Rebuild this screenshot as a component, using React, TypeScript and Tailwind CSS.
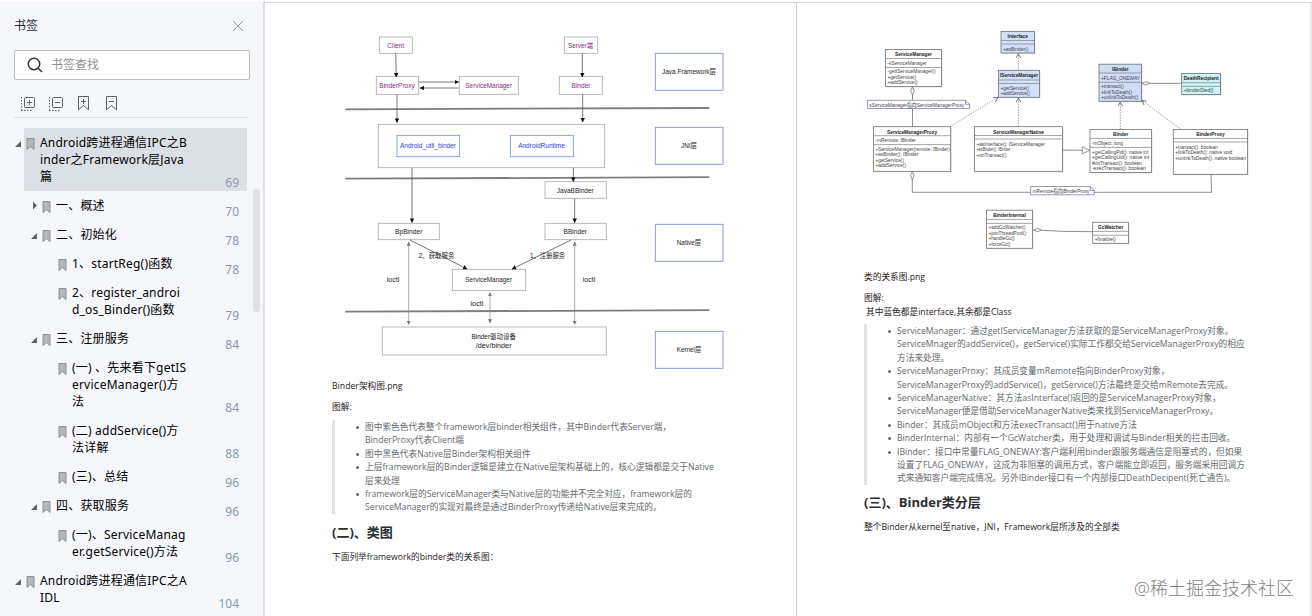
import React from "react"

type Level = 1 | 2 | 3

interface Bookmark {
  lines: string[]
  page: number
  level: Level
  arrow?: "open" | "closed"
  active?: boolean
}

const bookmarks: Bookmark[] = [
  {
    lines: ["Android跨进程通信IPC之B", "inder之Framework层Java", "篇"],
    page: 69,
    level: 1,
    arrow: "open",
    active: true,
  },
  { lines: ["一、概述"], page: 70, level: 2, arrow: "closed" },
  { lines: ["二、初始化"], page: 78, level: 2, arrow: "open" },
  { lines: ["1、startReg()函数"], page: 78, level: 3 },
  { lines: ["2、register_androi", "d_os_Binder()函数"], page: 79, level: 3 },
  { lines: ["三、注册服务"], page: 84, level: 2, arrow: "open" },
  {
    lines: ["(一) 、先来看下getIS", "erviceManager()方", "法"],
    page: 84,
    level: 3,
  },
  { lines: ["(二) addService()方", "法详解"], page: 88, level: 3 },
  { lines: ["(三)、总结"], page: 96, level: 3 },
  { lines: ["四、获取服务"], page: 96, level: 2, arrow: "open" },
  { lines: ["(一)、ServiceManag", "er.getService()方法"], page: 96, level: 3 },
  {
    lines: ["Android跨进程通信IPC之A", "IDL"],
    page: 104,
    level: 1,
    arrow: "open",
  },
]

const indent: Record<Level, string> = {
  1: "pl-[15px]",
  2: "pl-[31px]",
  3: "pl-[47px]",
}

function BookmarkRow({ item }: { item: Bookmark }) {
  return (
    <li
      className={`flex items-stretch py-1.5 ${indent[item.level]} ${
        item.active
          ? "bg-[linear-gradient(to_right,transparent_24px,#dbe0e6_24px,#dbe0e6_247px,transparent_247px)]"
          : ""
      }`}
    >
      <svg width="7" height="17" viewBox="0 0 7 17" className="shrink-0">
        {item.arrow === "open" && <path d="M6 7v6H0z" fill="#5f6368" />}
        {item.arrow === "closed" && <path d="M2 4.5l4 4-4 4z" fill="#5f6368" />}
      </svg>
      <svg
        width="9"
        height="17"
        viewBox="0 0 9 17"
        className="ml-[3.5px] shrink-0"
      >
        <path
          d="M1 4.500h7v11L4.500 12.500 1 15.500z"
          fill="#b3b6ba"
          stroke="#8c9095"
        />
      </svg>
      <div className="ml-[5.5px] flex-1 whitespace-nowrap text-[12px] leading-[17px] tracking-[0.2px] text-black">
        {item.lines.map((line) => (
          <div key={line}>{line}</div>
        ))}
      </div>
      <span className="mr-6 -mb-1.5 self-end text-[12px] leading-[17px] text-[#8b98b1]">
        {item.page}
      </span>
    </li>
  )
}

function Sidebar() {
  return (
    <aside className="relative h-full w-[265px] shrink-0 overflow-hidden border-t-2 border-r-2 border-t-white border-r-[#dcdfe3] bg-[#f5f7fa]">
      <div className="flex h-12 items-center justify-between pl-3.5 pr-[19px] text-[12px] text-[#1f2a37]">
        <span>书签</span>
        <svg width="12" height="12" viewBox="0 0 12 12" stroke="#9a9da1">
          <path d="M1 1l10 10M11 1L1 11" />
        </svg>
      </div>
      <div className="ml-3.5 flex h-[30px] w-[236px] items-center gap-2 rounded-xs border border-[#bcbfc3] bg-white pl-3">
        <svg
          width="16"
          height="16"
          viewBox="0 0 16 16"
          fill="none"
          stroke="#2b2f36"
          strokeWidth="1.5"
        >
          <circle cx="7" cy="7" r="5.7" />
          <path d="M11.200 11.200L15 15" />
        </svg>
        <span className="text-[12px] text-[#8f9297]">书签查找</span>
      </div>
      <div className="mx-3.5 flex h-[38px] items-center gap-3.5 border-b border-[#dde0e4] pl-[7px] pt-2.5">
        {["M6 5.500h5M8.500 3v5", "M6 5.500h5"].map((d) => (
          <svg
            key={d}
            width="14"
            height="14"
            viewBox="0 0 14 14"
            fill="none"
            stroke="#5c6169"
          >
            <rect x="3.5" y=".5" width="10" height="10" rx="1" />
            <path d={d} />
            <path d="M.5 0v13.500M0 13.500h11" strokeDasharray="1.5 1.5" />
          </svg>
        ))}
        {["M3 5.500h5M5.500 3v5", "M3 5.500h5"].map((d, i) => (
          <svg
            key={d}
            width="12"
            height="15"
            viewBox="0 0 12 15"
            fill="none"
            stroke="#5c6169"
            className={i === 0 ? "ml-px" : "ml-0.5"}
          >
            <path d="M.5.5h10v13.300L5.500 9.500.5 13.800z" />
            <path d={d} />
          </svg>
        ))}
      </div>
      <ul className="mt-2.5">
        {bookmarks.map((item) => (
          <BookmarkRow key={item.lines[0]} item={item} />
        ))}
      </ul>
      {/* Scrollbar thumb */}
      <div className="absolute left-[253px] top-[187px] h-[123px] w-[7px] rounded-full bg-[#dfe1e4]" />
    </aside>
  )
}

interface LabelProps {
  x: number
  y: number
  w?: number
  size?: number
  fill?: string
  bold?: boolean
  middle?: boolean
  children: string
}

// y is the vertical centre of the text
function Label({
  x,
  y,
  w,
  size = 6.7,
  fill = "#222",
  bold,
  middle = true,
  children,
}: LabelProps) {
  return (
    <text
      x={x}
      y={y + size * 0.36}
      fontSize={size}
      fill={fill}
      fontWeight={bold ? 700 : 400}
      textAnchor={middle ? "middle" : "start"}
      textLength={w}
      lengthAdjust="spacingAndGlyphs"
    >
      {children}
    </text>
  )
}

interface BoxProps {
  x: number
  y: number
  x2: number
  y2: number
  stroke?: string
  fill?: string
}

function Box({ x, y, x2, y2, stroke = "#a9a9a9", fill = "#fff" }: BoxProps) {
  return (
    <rect
      x={x}
      y={y}
      width={x2 - x}
      height={y2 - y}
      fill={fill}
      stroke={stroke}
      strokeWidth="0.8"
    />
  )
}

const purple = "#862a8c"
const blue = "#2f3bd0"

const layers = [
  { name: "Java Framework层", y: 53.3, w: 54 },
  { name: "JNI层", y: 127.3, w: 16 },
  { name: "Native层", y: 224.3, w: 24.5 },
  { name: "Kernel层", y: 331.3, w: 24.5 },
]

const solidArrows = [
  "M395.7 53.3L396.3 77",
  "M397 94.3V122.5",
  "M418.7 82H458.7",
  "M458.7 88H420",
  "M582.3 53.3V77",
  "M582.7 94.3V122",
  "M412 168V222.5",
  "M573.3 167.7V181.5",
  "M574.7 198.5V222.5",
  "M410 240L467 269",
  "M571 240L512 269",
]

const ioctlArrows = ["M408.7 242V324.5", "M490 292.5V323", "M574.7 242V324.5"]

function ArchitectureDiagram() {
  return (
    <svg
      width="400"
      height="345"
      viewBox="332 30 400 345"
      className="block font-['Liberation_Sans','Noto_Sans_CJK_SC',sans-serif]"
    >
      <defs>
        <marker
          id="solid"
          viewBox="0 0 6 6"
          refX="5.5"
          refY="3"
          markerWidth="4.5"
          markerHeight="4.5"
          markerUnits="userSpaceOnUse"
          orient="auto"
        >
          <path d="M0 0l6 3-6 3z" fill="#111" />
        </marker>
        <marker
          id="soft"
          viewBox="0 0 6 6"
          refX="5.5"
          refY="3"
          markerWidth="4"
          markerHeight="4"
          markerUnits="userSpaceOnUse"
          orient="auto-start-reverse"
        >
          <path d="M0 0l6 3-6 3z" fill="#777" />
        </marker>
      </defs>

      {/* Java framework */}
      <Box x={379.3} y={37} x2={412.3} y2={53.3} />
      <Box x={376.3} y={76.3} x2={418.7} y2={94.3} />
      <Box x={459.3} y={76.3} x2={518.3} y2={94.3} />
      <Box x={564.3} y={37} x2={597.7} y2={53.3} />
      <Box x={559.3} y={76.3} x2={602.3} y2={94.3} />
      <Label x={395.7} y={45.2} w={16.7} fill={purple}>Client</Label>
      <Label x={397} y={85.7} w={35.3} fill={purple}>BinderProxy</Label>
      <Label x={488.7} y={85.7} w={46.7} fill={purple}>ServiceManager</Label>
      <Label x={580.5} y={45.2} w={25} fill={purple}>Server端</Label>
      <Label x={581} y={85.7} w={19} fill={purple}>Binder</Label>

      {/* JNI */}
      <Box x={378.3} y={124.3} x2={604.7} y2={167.7} />
      <Box x={397} y={135.3} x2={459.7} y2={156.7} stroke="#6f8de8" />
      <Box x={510.3} y={135.3} x2={573.3} y2={156.7} stroke="#6f8de8" />
      <Label x={428} y={146} w={56} fill={blue}>Android_util_binder</Label>
      <Label x={541.5} y={146} w={46.7} fill={blue}>AndroidRuntime</Label>

      {/* Native and kernel */}
      <Box x={545} y={181.7} x2={606.3} y2={198.3} />
      <Box x={378.3} y={223.3} x2={439.3} y2={239.7} />
      <Box x={545} y={223.3} x2={606.3} y2={239.7} />
      <Box x={452.3} y={269.3} x2={525.7} y2={290.7} />
      <Box x={382.3} y={327} x2={606.3} y2={355} />
      <Label x={575.3} y={190.3} w={37}>JavaBBinder</Label>
      <Label x={408.7} y={231.7} w={27.3}>BpBinder</Label>
      <Label x={575.3} y={231.7} w={23.5}>BBinder</Label>
      <Label x={488.7} y={280} w={46.7}>ServiceManager</Label>
      <Label x={493.7} y={336.7} w={44.5}>Binder驱动设备</Label>
      <Label x={493.7} y={345.7} w={35.7}>/dev/binder</Label>

      {/* Layer separators */}
      <g stroke="#7d7d7d" strokeWidth="1.8">
        <path d="M345.3 109.3L709.3 108" />
        <path d="M345.3 178.7L709.3 177.2" />
        <path d="M345.3 311.7L709.3 310.2" />
      </g>

      {solidArrows.map((d) => (
        <path
          key={d}
          d={d}
          stroke="#555"
          strokeWidth="0.8"
          markerEnd="url(#solid)"
        />
      ))}
      {ioctlArrows.map((d) => (
        <path
          key={d}
          d={d}
          stroke="#888"
          strokeWidth="0.7"
          markerStart="url(#soft)"
          markerEnd="url(#soft)"
        />
      ))}
      <Label x={436.5} y={255.7} w={35.7}>2、获取服务</Label>
      <Label x={547.5} y={255.7} w={35}>1、注册服务</Label>
      <Label x={393} y={280} w={12.5}>ioctl</Label>
      <Label x={477} y={304} w={13}>ioctl</Label>
      <Label x={589} y={280} w={12.5}>ioctl</Label>

      {layers.map((layer) => (
        <g key={layer.name}>
          <Box
            x={655.3}
            y={layer.y}
            x2={723}
            y2={layer.y + 37}
            stroke="#7585d6"
          />
          <Label x={689} y={layer.y + 18.6} w={layer.w}>
            {layer.name}
          </Label>
        </g>
      ))}
    </svg>
  )
}

interface Row {
  text: string
  y: number
  end: number
}

interface UmlClass {
  name: string
  x: number
  y: number
  x2: number
  y2: number
  dividers: [number, number]
  titleY: number
  titleW: number
  fill?: string
  rows: Row[]
}

const classes: UmlClass[] = [
  {
    name: "ServiceManager",
    x: 885.5, y: 49.5, x2: 941.5, y2: 86.5,
    dividers: [58.5, 67.5],
    titleY: 54.2, titleW: 37,
    rows: [
      { text: "-sServiceManager", y: 63, end: 926.7 },
      { text: "-getIServiceManager()", y: 71.3, end: 935.5 },
      { text: "+getService()", y: 77, end: 916.3 },
      { text: "+addService()", y: 82.4, end: 917.7 },
    ],
  },
  {
    name: "Interface",
    x: 1001, y: 31.5, x2: 1034.5, y2: 53,
    dividers: [40.5, 44],
    titleY: 36.3, titleW: 20.3,
    fill: "#d3e0fa",
    rows: [{ text: "+asBinder()", y: 48.7, end: 1028.3 }],
  },
  {
    name: "IServiceManager",
    x: 998.5, y: 70.3, x2: 1039.5, y2: 97.3,
    dividers: [80, 83.5],
    titleY: 75, titleW: 38,
    fill: "#d3e0fa",
    rows: [
      { text: "+getService()", y: 87.7, end: 1029 },
      { text: "+addService()", y: 93, end: 1030 },
    ],
  },
  {
    name: "ServiceManagerProxy",
    x: 873.5, y: 126.7, x2: 950.7, y2: 171.3,
    dividers: [135.7, 144.6],
    titleY: 131.7, titleW: 50,
    rows: [
      { text: "-mRemote: IBinder", y: 140.3, end: 915.7 },
      { text: "+ServiceManager(remote: IBinder)", y: 148.7, end: 949.8 },
      { text: "+asBinder(): IBinder", y: 154.1, end: 918.3 },
      { text: "+getService()", y: 159.7, end: 904 },
      { text: "+addService()", y: 165.3, end: 906 },
    ],
  },
  {
    name: "ServiceManagerNative",
    x: 974.4, y: 126.7, x2: 1062.6, y2: 171.3,
    dividers: [135.5, 139],
    titleY: 131.7, titleW: 51,
    rows: [
      { text: "+asInterface(): IServiceManager", y: 144, end: 1045 },
      { text: "+asBinder(): IBinder", y: 149.4, end: 1010.3 },
      { text: "+onTransact()", y: 155, end: 1006.3 },
    ],
  },
  {
    name: "IBinder",
    x: 1099, y: 64.2, x2: 1141.6, y2: 101.3,
    dividers: [73, 82.3],
    titleY: 69, titleW: 16.5,
    fill: "#cfdcf8",
    rows: [
      { text: "+FLAG_ONEWAY", y: 78, end: 1140 },
      { text: "+transact()", y: 86.6, end: 1123.7 },
      { text: "+linkToDeath()", y: 92, end: 1132 },
      { text: "+unlinkToDeath()", y: 97.4, end: 1138 },
    ],
  },
  {
    name: "DeathRecipient",
    x: 1181.7, y: 73.4, x2: 1220.6, y2: 94.6,
    dividers: [82.7, 86.3],
    titleY: 78, titleW: 35,
    fill: "#cdf3f6",
    rows: [{ text: "+binderDied()", y: 90.4, end: 1213.5 }],
  },
  {
    name: "Binder",
    x: 1090, y: 129.4, x2: 1151.4, y2: 172.6,
    dividers: [138.4, 147.4],
    titleY: 134.4, titleW: 15.5,
    rows: [
      { text: "-mObject: long", y: 143, end: 1123 },
      { text: "+getCallingPid(): native int", y: 151.7, end: 1148.3 },
      { text: "+getCallingUid(): native int", y: 157.3, end: 1149 },
      { text: "#onTransact(): boolean", y: 163, end: 1141.7 },
      { text: "-execTransact(): boolean", y: 168.4, end: 1145.7 },
    ],
  },
  {
    name: "BinderProxy",
    x: 1173.3, y: 129.4, x2: 1247.6, y2: 174.3,
    dividers: [138.4, 142],
    titleY: 134.4, titleW: 28.5,
    rows: [
      { text: "+transact(): boolean", y: 147, end: 1217.7 },
      { text: "+linkToDeath(): native void", y: 152.4, end: 1232.3 },
      { text: "+unlinkToDeath(): native boolean", y: 158, end: 1246 },
    ],
  },
  {
    name: "BinderInternal",
    x: 986.4, y: 210.2, x2: 1032.6, y2: 248.3,
    dividers: [219.4, 223.4],
    titleY: 214.8, titleW: 32.5,
    rows: [
      { text: "+addGcWatcher()", y: 227.4, end: 1025.7 },
      { text: "+joinThreadPool()", y: 233, end: 1026.3 },
      { text: "+handleGc()", y: 238.6, end: 1014.7 },
      { text: "+forceGc()", y: 244, end: 1010.7 },
    ],
  },
  {
    name: "GcWatcher",
    x: 1092.7, y: 222.2, x2: 1128.6, y2: 243.3,
    dividers: [231.4, 235.3],
    titleY: 226.8, titleW: 25.5,
    rows: [{ text: "+finalize()", y: 239.4, end: 1116 }],
  },
]

const dependencies = [
  "M1018.3 70V53.7",
  "M1018.5 126.7V98",
  "M950 126.7L998 97.3",
  "M1120.3 129.3V102",
  "M1181 129.3L1142 100.5",
]

function ClassDiagram() {
  return (
    <svg
      width="400"
      height="230"
      viewBox="864 27 400 230"
      className="block font-['Liberation_Sans','Noto_Sans_CJK_SC',sans-serif]"
    >
      <defs>
        <marker
          id="open"
          viewBox="0 0 6 6"
          refX="5.5"
          refY="3"
          markerWidth="5"
          markerHeight="5"
          markerUnits="userSpaceOnUse"
          orient="auto"
        >
          <path d="M0 0l5.500 3L0 6" fill="none" stroke="#666" />
        </marker>
      </defs>
      {classes.map((c) => (
        <g key={c.name}>
          <rect
            x={c.x + 1}
            y={c.y + 1}
            width={c.x2 - c.x}
            height={c.y2 - c.y}
            fill="#e2e2e2"
          />
          <Box x={c.x} y={c.y} x2={c.x2} y2={c.y2} fill={c.fill} stroke="#707070" />
          {c.dividers.map((y) => (
            <path
              key={y}
              d={`M${c.x} ${y}H${c.x2}`}
              stroke="#808080"
              strokeWidth="0.7"
            />
          ))}
          <Label x={(c.x + c.x2) / 2} y={c.titleY} w={c.titleW} size={5.2} bold>
            {c.name}
          </Label>
          {c.rows.map((row) => (
            <Label
              key={row.text}
              x={c.x + 2}
              y={row.y}
              w={row.end - c.x - 2}
              size={5.2}
              middle={false}
              fill="#444"
            >
              {row.text}
            </Label>
          ))}
        </g>
      ))}

      <g fill="none" stroke="#707070" strokeWidth="0.8">
        <path d="M912.5 95V126.7" />
        <path d="M912.3 179.3V192.3H1211.6L1211 174.3" />
        <path d="M1062.7 150L1082.3 150.3" />
        <path d="M1150 83.3H1181.7" />
        <path d="M1041.5 230.3L1062 231.3L1092.7 231.7" />
      </g>
      <g fill="#fff" stroke="#666" strokeWidth="0.7">
        <path d="M912.5 87l1.800 4-1.800 4-1.800-4z" />
        <path d="M912.3 171.5l1.800 4-1.800 4-1.800-4z" />
        <path d="M1142 83.3l4-1.600 4 1.600-4 1.600z" />
        <path d="M1033.5 230l4-1.600 4 1.600-4 1.600z" />
        <path d="M1082.3 146.8l7.400 3.500-7.400 3.500z" />
      </g>
      {dependencies.map((d) => (
        <path
          key={d}
          d={d}
          stroke="#777"
          strokeWidth="0.7"
          strokeDasharray="1.5 1.2"
          markerEnd="url(#open)"
        />
      ))}

      {/* Notes */}
      <g fill="#fff" stroke="#6c6ca0" strokeWidth="0.7">
        <path d="M867.5 100.3H965.5L969.5 104.3V108.5H867.5zM965.5 100.3V104.3H969.5" />
        <path d="M1030.7 186.5H1090.3L1094.3 190.5V194.8H1030.7zM1090.3 186.5V190.5H1094.3" />
      </g>
      <Label x={869.3} y={104.7} w={95} size={5.2} middle={false} fill="#444">
        sServiceManager指向ServiceManagerProxy
      </Label>
      <Label x={1032.5} y={190.9} w={57} size={5.2} middle={false} fill="#444">
        mRemote指向BinderProxy
      </Label>
    </svg>
  )
}

function Quote({ items }: { items: string[][] }) {
  return (
    <ul className="border-l-[3px] border-[#dfe2e5] pl-5 text-[8.7px] leading-[13.4px] text-[#66696c]">
      {items.map((lines) => (
        <li key={lines[0]} className="flex">
          <span className="mt-[6px] ml-px mr-[6px] h-[3px] w-[3px] shrink-0 rounded-full bg-[#66696c]" />
          <div className="translate-y-[0.8px] whitespace-nowrap">
            {lines.map((line) => (
              <div key={line}>{line}</div>
            ))}
          </div>
        </li>
      ))}
    </ul>
  )
}

const architectureNotes = [
  [
    "图中紫色色代表整个framework层binder相关组件，其中Binder代表Server端，",
    "BinderProxy代表Client端",
  ],
  ["图中黑色代表Native层Binder架构相关组件"],
  [
    "上层framework层的Binder逻辑是建立在Native层架构基础上的，核心逻辑都是交于Native",
    "层来处理",
  ],
  [
    "framework层的ServiceManager类与Native层的功能并不完全对应，framework层的",
    "ServiceManager的实现对最终是通过BinderProxy传递给Native层来完成的。",
  ],
]

const classNotes = [
  [
    "ServiceManager：通过getIServiceManager方法获取的是ServiceManagerProxy对象。",
    "ServiceMnager的addService()，getService()实际工作都交给ServiceManagerProxy的相应",
    "方法来处理。",
  ],
  [
    "ServiceManagerProxy：其成员变量mRemote指向BinderProxy对象，",
    "ServiceManagerProxy的addService()，getService()方法最终是交给mRemote去完成。",
  ],
  [
    "ServiceManagerNative：其方法asInterface()返回的是ServiceManagerProxy对象，",
    "ServiceManager便是借助ServiceManagerNative类来找到ServiceManagerProxy。",
  ],
  ["Binder：其成员mObject和方法execTransact()用于native方法"],
  ["BinderInternal：内部有一个GcWatcher类，用于处理和调试与Binder相关的拦击回收。"],
  [
    "IBinder：接口中常量FLAG_ONEWAY:客户端利用binder跟服务端通信是阻塞式的，但如果",
    "设置了FLAG_ONEWAY，这成为非阻塞的调用方式，客户端能立即返回，服务端采用回调方",
    "式来通知客户端完成情况。另外IBinder接口有一个内部接口DeathDecipent(死亡通告)。",
  ],
]

export default function App() {
  return (
    <div className="flex h-[616px] w-[1312px] overflow-hidden bg-white font-['Noto_Sans','Noto_Sans_CJK_SC',sans-serif]">
      <Sidebar />
      <main className="mt-0.5 flex flex-1 border-t border-[#d5d8dc] font-['Open_Sans','Noto_Sans_CJK_SC',sans-serif] text-[8.7px] leading-[14px] text-[#1f2225]">
        <article className="w-[532px] border-r border-[#c9ccd0] pl-[67px] pt-[27px]">
          <ArchitectureDiagram />
          <p className="mt-1">Binder架构图.png</p>
          <p className="mt-[7px] mb-1.5">图解:</p>
          <Quote items={architectureNotes} />
          <h2 className="mt-2 text-[13px] font-bold leading-5 text-[#2b2e31]">
            (二)、类图
          </h2>
          <p className="mt-2">下面列举framework的binder类的关系图：</p>
        </article>
        <article className="flex flex-1 flex-col border-r-2 border-[#e6e8ea] pl-[67px] pt-6">
          <ClassDiagram />
          <p className="mt-[13px]">类的关系图.png</p>
          <p className="mt-[7px]">图解:</p>
          <p className="mb-[5px] pl-0.5">其中蓝色都是interface,其余都是Class</p>
          <Quote items={classNotes} />
          <h2 className="mt-[7px] text-[13px] font-bold leading-5 text-[#2b2e31]">
            (三)、Binder类分层
          </h2>
          <p className="mt-2">
            整个Binder从kernel至native，JNI，Framework层所涉及的全部类
          </p>
          <p className="mt-auto mr-4 mb-4 self-end text-[18px] font-light leading-6 text-[#808080]">
            @稀土掘金技术社区
          </p>
        </article>
      </main>
    </div>
  )
}
